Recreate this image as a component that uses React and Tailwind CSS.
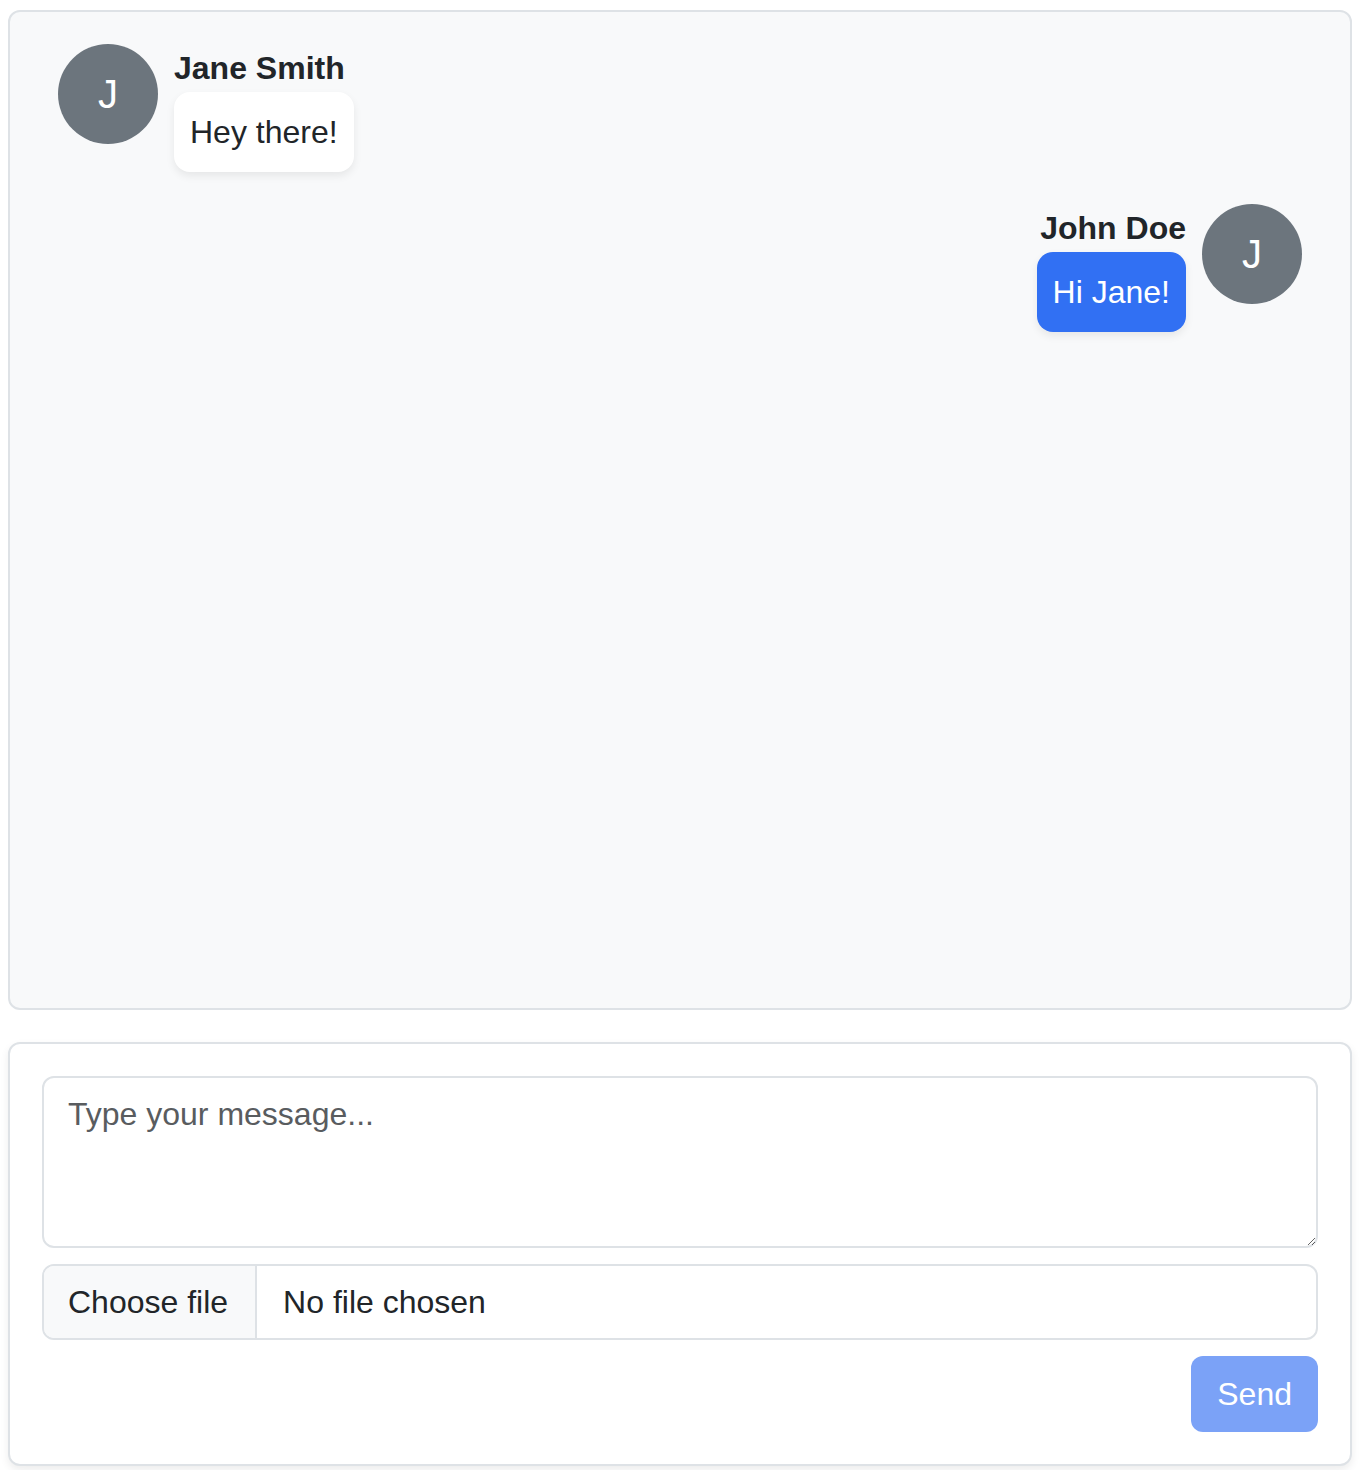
import React from 'react';

const messages = [
  { id: 1, name: 'Jane Smith', text: 'Hey there!', mine: false },
  { id: 2, name: 'John Doe', text: 'Hi Jane!', mine: true },
];

const Avatar = ({ name }) => (
  <div className="w-[100px] h-[100px] shrink-0 rounded-full bg-[#6c757d] text-white flex items-center justify-center text-[40px] leading-none">
    {name[0]}
  </div>
);

const Message = ({ msg }) => (
  <div className={`flex items-start gap-4 mb-8 ${msg.mine ? 'flex-row-reverse' : ''}`}>
    <Avatar name={msg.name} />
    <div className={`flex flex-col ${msg.mine ? 'items-end' : 'items-start'}`}>
      <div className="font-bold text-[32px] leading-[48px] text-[#212529]">{msg.name}</div>
      <div
        className={`px-4 py-4 rounded-2xl text-[32px] leading-[48px] shadow-[0_4px_8px_rgba(0,0,0,0.075)] ${
          msg.mine ? 'bg-[#3170f3] text-white' : 'bg-white text-[#212529]'
        }`}
      >
        {msg.text}
      </div>
    </div>
  </div>
);

export default function App() {
  return (
    <div className="pl-[8px] pr-[14px] pt-[10px] pb-[4px] bg-white font-['Liberation_Sans',Arial,sans-serif] text-[#212529]">
      <div className="h-[1000px] border-2 border-[#dee2e6] rounded-xl bg-[#f8f9fa] p-8 overflow-y-auto">
        <div className="px-4">
          {messages.map(m => <Message key={m.id} msg={m} />)}
        </div>
      </div>

      <div className="mt-8 border-2 border-[#dee2e6] rounded-xl bg-white p-8 shadow-[0_4px_8px_rgba(0,0,0,0.075)]">
        <textarea
          placeholder="Type your message..."
          className="block w-full h-[172px] border-2 border-[#dee2e6] rounded-xl px-6 py-3 text-[32px] leading-[48px] text-[#212529] placeholder:text-[#595c5f] outline-none font-['Liberation_Sans',Arial,sans-serif]"
        />
        <div className="mt-4 h-[76px] flex border-2 border-[#dee2e6] rounded-xl overflow-hidden text-[32px] leading-[48px]">
          <div className="bg-[#f8f9fa] border-r-2 border-[#dee2e6] pl-6 pr-[27px] flex items-center">Choose file</div>
          <div className="pl-[26px] flex items-center">No file chosen</div>
        </div>
        <div className="mt-4 flex justify-end">
          <button className="h-[76px] px-[26px] rounded-xl bg-[#7ba2f7] text-white text-[32px] leading-[48px]">Send</button>
        </div>
      </div>
    </div>
  );
}
